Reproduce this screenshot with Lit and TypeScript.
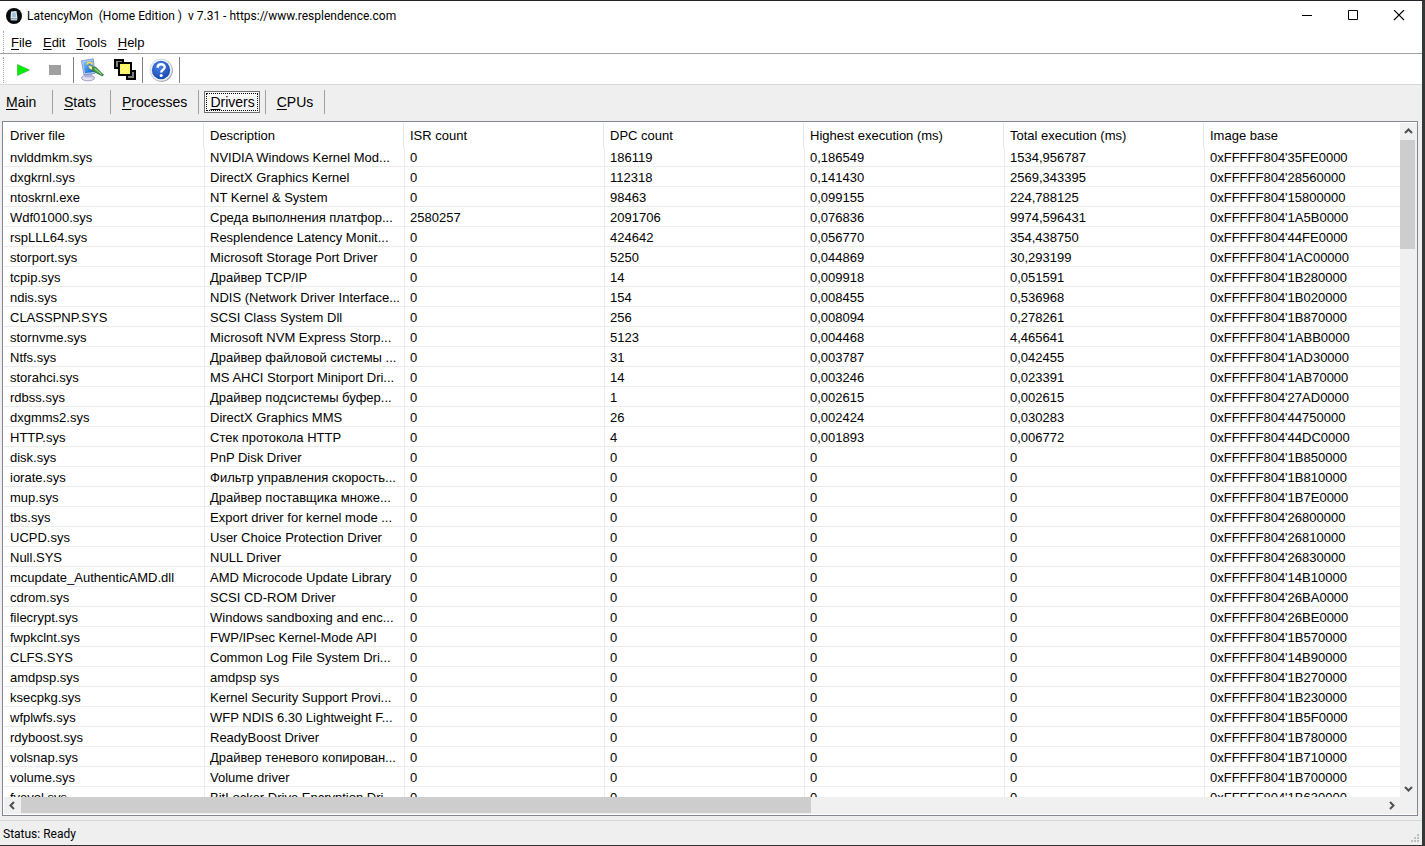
import { LitElement, html, css, svg } from "lit";
import { customElement, state } from "lit/decorators.js";
import { classMap } from "lit/directives/class-map.js";

type Row = [string, string, string, string, string, string, string];

const BASE = "0xFFFFF804'";

const COLUMNS = [
  "Driver file",
  "Description",
  "ISR count",
  "DPC count",
  "Highest execution (ms)",
  "Total execution (ms)",
  "Image base",
];

const idle = (file: string, description: string, base: string): Row => [
  file, description, "0", "0", "0", "0", base,
];

const ROWS: Row[] = [
  ["nvlddmkm.sys", "NVIDIA Windows Kernel Mod...", "0", "186119", "0,186549", "1534,956787", "35FE0000"],
  ["dxgkrnl.sys", "DirectX Graphics Kernel", "0", "112318", "0,141430", "2569,343395", "28560000"],
  ["ntoskrnl.exe", "NT Kernel & System", "0", "98463", "0,099155", "224,788125", "15800000"],
  ["Wdf01000.sys", "Среда выполнения платфор...", "2580257", "2091706", "0,076836", "9974,596431", "1A5B0000"],
  ["rspLLL64.sys", "Resplendence Latency Monit...", "0", "424642", "0,056770", "354,438750", "44FE0000"],
  ["storport.sys", "Microsoft Storage Port Driver", "0", "5250", "0,044869", "30,293199", "1AC00000"],
  ["tcpip.sys", "Драйвер TCP/IP", "0", "14", "0,009918", "0,051591", "1B280000"],
  ["ndis.sys", "NDIS (Network Driver Interface...", "0", "154", "0,008455", "0,536968", "1B020000"],
  ["CLASSPNP.SYS", "SCSI Class System Dll", "0", "256", "0,008094", "0,278261", "1B870000"],
  ["stornvme.sys", "Microsoft NVM Express Storp...", "0", "5123", "0,004468", "4,465641", "1ABB0000"],
  ["Ntfs.sys", "Драйвер файловой системы ...", "0", "31", "0,003787", "0,042455", "1AD30000"],
  ["storahci.sys", "MS AHCI Storport Miniport Dri...", "0", "14", "0,003246", "0,023391", "1AB70000"],
  ["rdbss.sys", "Драйвер подсистемы буфер...", "0", "1", "0,002615", "0,002615", "27AD0000"],
  ["dxgmms2.sys", "DirectX Graphics MMS", "0", "26", "0,002424", "0,030283", "44750000"],
  ["HTTP.sys", "Стек протокола HTTP", "0", "4", "0,001893", "0,006772", "44DC0000"],
  idle("disk.sys", "PnP Disk Driver", "1B850000"),
  idle("iorate.sys", "Фильтр управления скорость...", "1B810000"),
  idle("mup.sys", "Драйвер поставщика множе...", "1B7E0000"),
  idle("tbs.sys", "Export driver for kernel mode ...", "26800000"),
  idle("UCPD.sys", "User Choice Protection Driver", "26810000"),
  idle("Null.SYS", "NULL Driver", "26830000"),
  idle("mcupdate_AuthenticAMD.dll", "AMD Microcode Update Library", "14B10000"),
  idle("cdrom.sys", "SCSI CD-ROM Driver", "26BA0000"),
  idle("filecrypt.sys", "Windows sandboxing and enc...", "26BE0000"),
  idle("fwpkclnt.sys", "FWP/IPsec Kernel-Mode API", "1B570000"),
  idle("CLFS.SYS", "Common Log File System Dri...", "14B90000"),
  idle("amdpsp.sys", "amdpsp sys", "1B270000"),
  idle("ksecpkg.sys", "Kernel Security Support Provi...", "1B230000"),
  idle("wfplwfs.sys", "WFP NDIS 6.30 Lightweight F...", "1B5F0000"),
  idle("rdyboost.sys", "ReadyBoost Driver", "1B780000"),
  idle("volsnap.sys", "Драйвер теневого копирован...", "1B710000"),
  idle("volume.sys", "Volume driver", "1B700000"),
  idle("fvevol.sys", "BitLocker Drive Encryption Dri...", "1B630000"),
];

const MENUS = ["File", "Edit", "Tools", "Help"];
const TABS = ["Main", "Stats", "Processes", "Drivers", "CPUs"];

// The first letter of a label is its keyboard mnemonic.
const mnemonic = (label: string) => html`<u>${label[0]}</u>${label.slice(1)}`;

const appIcon = html`<svg class="app-icon" viewBox="0 0 16 16" aria-hidden="true">
  <circle cx="8" cy="8" r="8" fill="#05090c" />
  <path d="M5 3.500 10.500 3l1 7.500H4.500z" fill="#dbeaf4" />
  <path d="M6.200 4.800 9.500 4.500l.6 4.800H6z" fill="#9fc2da" />
  <path d="M4.500 10.500h7l-.5 2H5z" fill="#b9cad6" />
</svg>`;

const playIcon = html`<svg class="tool-icon" viewBox="0 0 24 24" aria-hidden="true">
  <path d="M6.500 6.500v11L18.500 12z" fill="#00f000" stroke="#3f9f3f" stroke-width=".6" />
</svg>`;

const stopIcon = html`<svg class="tool-icon" viewBox="0 0 24 24" aria-hidden="true">
  <rect x="6" y="7" width="12" height="10" fill="#a0a0a0" />
</svg>`;

const monitorIcon = html`<svg class="tool-icon" viewBox="0 0 24 24" aria-hidden="true">
  <defs>
    <linearGradient id="screen" x1="0" y1="0" x2="1" y2="1">
      <stop offset="0" stop-color="#8fd0f8" />
      <stop offset=".5" stop-color="#3b93ee" />
      <stop offset="1" stop-color="#1b4fc0" />
    </linearGradient>
  </defs>
  <ellipse cx="8" cy="20" rx="6.500" ry="2.800" fill="#e3e1f2" stroke="#8b88b8" stroke-width=".8" />
  <path d="M5 15.500h7l1 4H4.500z" fill="#b4b5da" />
  <path d="M1.500 2.800 13.200.8 15 15.300 4 17z" fill="#b9d0f6" stroke="#6d86c8" stroke-width=".8" />
  <path d="M3 4.200 12.200 2.500 13.600 14 5 15.300z" fill="url(#screen)" />
  <path d="M6.800 6.500c1-3 5.200-2.500 5.200.2" fill="none" stroke="#f7dc4e" stroke-width="1.700" />
  <path d="M7.500 7.200 11.500 8l2.800 1.600-1 3-3.800-1.800z" fill="#f3f0b8" stroke="#6f7f3c" stroke-width=".6" />
  <path d="M12.500 9.200 15.500 9 23.500 17l-1.300.8-9.200-4.800z" fill="#46a83c" stroke="#1c5a30" stroke-width=".8" />
  <path d="M14.500 10.400l7 5.800" stroke="#a9e491" stroke-width="1" />
</svg>`;

const layersIcon = html`<svg class="tool-icon" viewBox="0 0 24 24" aria-hidden="true" shape-rendering="crispEdges">
  <rect x="3" y="2" width="8" height="8" fill="#808080" stroke="#000" stroke-width="2" />
  <rect x="15" y="13" width="8" height="8" fill="#808080" stroke="#000" stroke-width="2" />
  <rect x="7" y="5" width="12" height="12" fill="#fff45c" stroke="#000" stroke-width="2" />
  <path d="M9 15l8-8M9 11l4-4M13 15l4-4" stroke="#fffbb4" stroke-width="1" />
</svg>`;

const helpIcon = html`<svg class="tool-icon" viewBox="0 0 24 24" aria-hidden="true">
  <defs>
    <radialGradient id="ball" cx=".4" cy=".3" r=".75">
      <stop offset="0" stop-color="#4b82e6" />
      <stop offset="1" stop-color="#1746b0" />
    </radialGradient>
  </defs>
  <circle cx="12.600" cy="12.600" r="11.200" fill="#8f96a4" />
  <circle cx="12" cy="12" r="11" fill="#f1f4f9" stroke="#c3c9d4" stroke-width=".6" />
  <circle cx="12" cy="12" r="9.200" fill="url(#ball)" />
  <path d="M8.600 9.700C8.600 5.300 15.800 5.200 15.700 9.300 15.600 11.700 12.200 11.700 12.200 14.400" fill="none" stroke="#fff" stroke-width="2.400" />
  <circle cx="12.200" cy="17.500" r="1.500" fill="#fff" />
</svg>`;

const chevron = (points: string) => html`<svg class="chevron" viewBox="0 0 9 9" aria-hidden="true">
  ${svg`<polyline points=${points} fill="none" stroke="#505050" stroke-width="2" />`}
</svg>`;

@customElement("app-root")
export class AppRoot extends LitElement {
  @state() private active = "Drivers";

  static styles = css`
    :host {
      display: block;
      color: #000;
      font: 13px/20px "Liberation Sans", Arial, sans-serif;
    }
    * {
      box-sizing: border-box;
    }
    button {
      margin: 0;
      padding: 0;
      border: 0;
      background: none;
      color: inherit;
      font: inherit;
    }
    svg {
      display: block;
    }
    u {
      text-underline-offset: 2px;
    }
    .window {
      display: flex;
      flex-direction: column;
      height: 100vh;
      background: #efefef;
      border-top: 1px solid #23212a;
      border-right: 3px solid #343837;
      border-bottom: 1px solid #303030;
    }
    .title-bar {
      display: flex;
      align-items: center;
      height: 30px;
      padding-left: 6px;
      background: #fff;
    }
    .app-icon {
      width: 16px;
      height: 16px;
      margin-right: 5px;
    }
    .title {
      flex: 1;
      margin: 0;
      font: 12px/20px Roboto, sans-serif;
      white-space: pre;
    }
    .caption-button {
      display: grid;
      place-items: center;
      width: 46px;
      height: 30px;
    }
    .caption-button svg {
      width: 12px;
      height: 12px;
    }
    .menu-bar {
      display: flex;
      gap: 11px;
      height: 22px;
      margin-left: 3px;
      padding-top: 2px;
      padding-left: 7px;
      background: #fff;
      border-left: 1px dotted #a0a0a0;
    }
    .strip {
      background: #fff;
    }
    .tool-bar {
      display: flex;
      align-items: center;
      height: 32px;
      padding: 1px 0 0 3px;
      background: #fff;
      border-top: 1px solid #a0a0a0;
      border-bottom: 1px solid #d9d9d9;
    }
    .grip {
      width: 1px;
      height: 26px;
      margin-right: 3px;
      border-left: 1px dotted #a0a0a0;
    }
    .tool {
      display: grid;
      place-items: center;
      width: 32px;
      height: 28px;
    }
    .tool-icon {
      width: 24px;
      height: 24px;
    }
    .rule {
      width: 1px;
      height: 26px;
      margin: 0 2px;
      background: #808080;
    }
    .tabs {
      display: flex;
      align-items: center;
      height: 36px;
      padding-bottom: 2px;
    }
    .tab-slot {
      display: flex;
      align-items: center;
      min-width: 58px;
      height: 24px;
      border-right: 1px solid #a0a0a0;
    }
    .tab-slot:first-child {
      min-width: 53px;
    }
    .tab {
      padding: 0 11px;
      font-size: 14px;
      line-height: 20px;
    }
    .tab-slot:first-child .tab {
      padding-left: 6px;
    }
    .tab-slot .tab.active {
      margin: 0 5px;
      padding: 0 4px 0 5px;
      background: #f8f8f8;
      border: 1px solid #707070;
      outline: 1px dotted #000;
      outline-offset: -3px;
    }
    .list {
      display: grid;
      grid-template: minmax(0, 1fr) 17px / minmax(0, 1fr) 17px;
      flex: 1;
      min-height: 0;
      margin: 0 4px 4px 2px;
      padding: 1px 0 1px 1px;
      background: #fff;
      border: 1px solid #828790;
    }
    .viewport {
      overflow: hidden;
    }
    table {
      width: 1400px;
      border-collapse: separate;
      border-spacing: 0;
      table-layout: fixed;
    }
    th,
    td {
      height: 20px;
      padding: 0 0 0 6px;
      font-weight: 400;
      line-height: 19px;
      text-align: left;
      white-space: nowrap;
      overflow: hidden;
    }
    th {
      height: 24px;
      border-right: 1px solid #e3e6e6;
    }
    td {
      padding-top: 2px;
      line-height: 17px;
      border-bottom: 1px solid #ececec;
    }
    td + td {
      padding-left: 5px;
      border-left: 1px solid #ececec;
    }
    .scroll {
      display: flex;
      background: #f0f0f0;
    }
    .vertical {
      flex-direction: column;
    }
    .arrow {
      display: grid;
      place-items: center;
      flex: none;
      width: 17px;
      height: 17px;
    }
    .chevron {
      width: 9px;
      height: 9px;
    }
    .track {
      flex: 1;
    }
    .thumb {
      background: #cdcdcd;
    }
    .vertical .thumb {
      width: 15px;
      height: 17%;
    }
    .horizontal .thumb {
      width: 58%;
      height: 16px;
    }
    .corner {
      background: #f0f0f0;
    }
    .status-bar {
      display: flex;
      align-items: center;
      justify-content: space-between;
      height: 25px;
      padding: 1px 2px 0 3px;
      border-top: 1px solid #d7d7d7;
      font: 12px/20px Roboto, sans-serif;
    }
    .size-grip {
      align-self: flex-end;
      width: 9px;
      height: 11px;
    }
  `;

  private tab(name: string) {
    const active = name === this.active;
    return html`<div class="tab-slot" role="presentation">
      <button
        class=${classMap({ tab: true, active })}
        role="tab"
        aria-selected=${active ? "true" : "false"}
        @click=${() => (this.active = name)}
      >${mnemonic(name)}</button>
    </div>`;
  }

  render() {
    return html`<main class="window">
      <header class="title-bar">
        ${appIcon}
        <h1 class="title">LatencyMon  (Home Edition )  v 7.31 - https://www.resplendence.com</h1>
        <button class="caption-button" aria-label="Minimize">
          <svg viewBox="0 0 12 12"><path d="M1 5.500h10" stroke="#000" /></svg>
        </button>
        <button class="caption-button" aria-label="Maximize">
          <svg viewBox="0 0 12 12"><path d="M1.500 .5h9v9h-9z" fill="none" stroke="#000" /></svg>
        </button>
        <button class="caption-button" aria-label="Close">
          <svg viewBox="0 0 12 12"><path d="M1 0l10 10M11 0 1 10" stroke="#000" stroke-width="1.100" /></svg>
        </button>
      </header>
      <div class="strip">
        <nav class="menu-bar" aria-label="Menu">
          ${MENUS.map((m) => html`<button>${mnemonic(m)}</button>`)}
        </nav>
      </div>
      <div class="tool-bar" role="toolbar">
        <span class="grip"></span>
        <button class="tool" aria-label="Start">${playIcon}</button>
        <button class="tool" aria-label="Stop">${stopIcon}</button>
        <span class="rule"></span>
        <button class="tool" aria-label="Options">${monitorIcon}</button>
        <button class="tool" aria-label="Windows">${layersIcon}</button>
        <span class="rule"></span>
        <button class="tool" aria-label="Help">${helpIcon}</button>
        <span class="rule"></span>
      </div>
      <div class="tabs" role="tablist">${TABS.map((t) => this.tab(t))}</div>
      <section class="list" aria-label="Drivers">
        <div class="viewport">
          <table>
            <thead>
              <tr>${COLUMNS.map((c) => html`<th scope="col">${c}</th>`)}</tr>
            </thead>
            <tbody>
              ${ROWS.map(
                (row) => html`<tr>
                  ${row.map((cell, i) => html`<td>${i === 6 ? BASE + cell : cell}</td>`)}
                </tr>`,
              )}
            </tbody>
          </table>
        </div>
        <div class="scroll vertical">
          <button class="arrow" aria-label="Scroll up">${chevron("1,6 4.5,2.5 8,6")}</button>
          <div class="track"><div class="thumb"></div></div>
          <button class="arrow" aria-label="Scroll down">${chevron("1,3 4.5,6.5 8,3")}</button>
        </div>
        <div class="scroll horizontal">
          <button class="arrow" aria-label="Scroll left">${chevron("6,1 2.5,4.5 6,8")}</button>
          <div class="track"><div class="thumb"></div></div>
          <button class="arrow" aria-label="Scroll right">${chevron("3,1 6.5,4.5 3,8")}</button>
        </div>
        <div class="corner"></div>
      </section>
      <footer class="status-bar">
        <span>Status: Ready</span>
        <svg class="size-grip" viewBox="0 0 9 11" aria-hidden="true">
          <path d="M6 0h2v2h-2zM3 3h2v2h-2zM6 3h2v2h-2zM0 6h2v2h-2zM3 6h2v2h-2zM6 6h2v2h-2z" fill="#bdbdbd" />
        </svg>
      </footer>
    </main>`;
  }
}
